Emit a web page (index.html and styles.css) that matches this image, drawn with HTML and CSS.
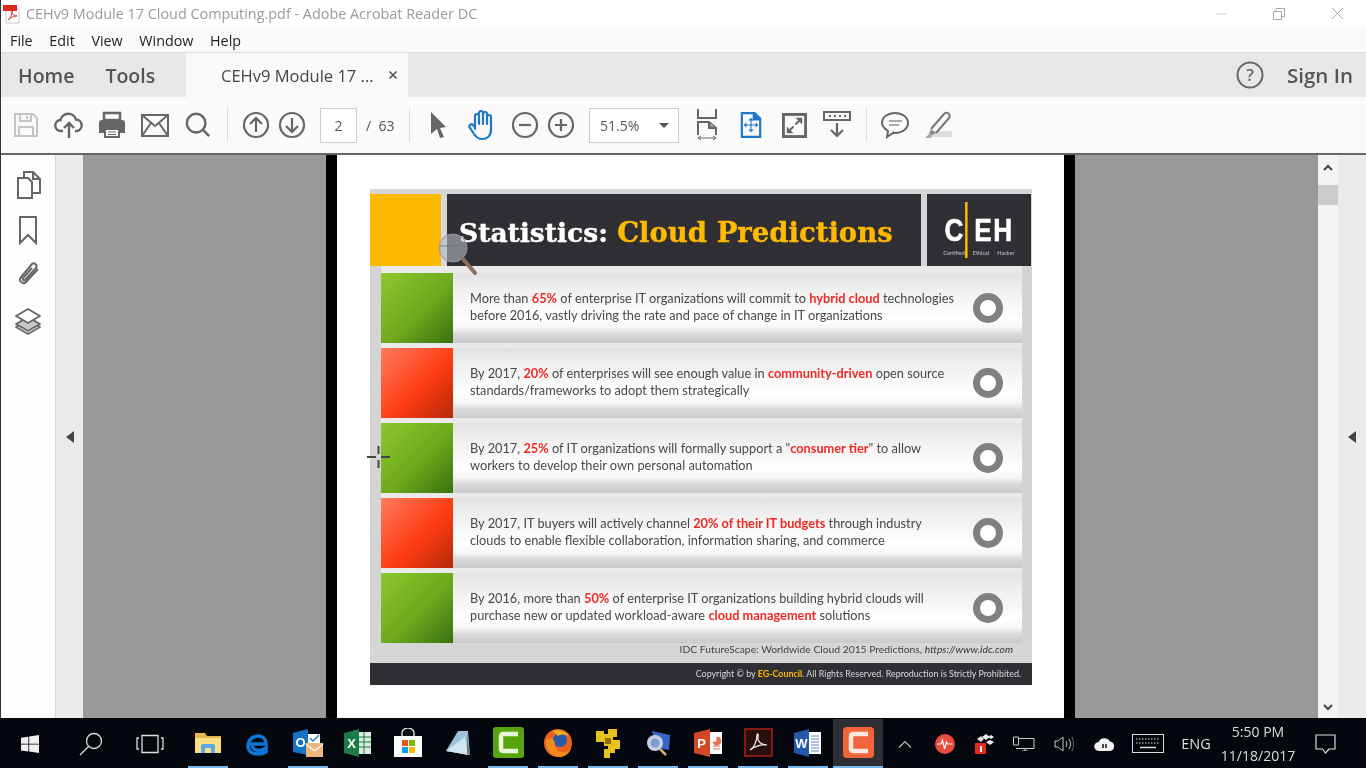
FILE: index.html
```html
<!DOCTYPE html>
<html lang="en">
<head>
    <meta charset="UTF-8" />
    <meta name="viewport" content="width=device-width, initial-scale=1.0" />
    <title>CEHv9 Module 17 Cloud Computing.pdf - Adobe Acrobat Reader DC</title>
    <link rel="stylesheet" href="styles.css">
</head>
<body>
<div class="window">
    <div class="titlebar">
        <svg class="pdf-icon" width="20" height="20" viewBox="0 0 20 20">
            <path d="M4 3h10l3 3v13H4z" fill="#fff" stroke="#c8c8c8"/>
            <path d="M6 16c3-2 4-6 4-9 0 3 2 5 5 5-3 0-6 1-9 4z" fill="none" stroke="#d8372c" stroke-width="1"/>
            <rect x="1" y="1" width="14" height="6" fill="#e0281e"/>
        </svg>
        <span class="title-text">CEHv9 Module 17 Cloud Computing.pdf - Adobe Acrobat Reader DC</span>
        <div class="win-controls">
            <span class="win-btn"><svg width="12" height="12" viewBox="0 0 12 12"><path d="M1 6h10" stroke="#d4d4d4"/></svg></span>
            <span class="win-btn"><svg width="12" height="12" viewBox="0 0 12 12"><path d="M.5 3.5h8v8h-8zM3 3V.5h8.5v8H9" fill="none" stroke="#a8a8a8"/></svg></span>
            <span class="win-btn"><svg width="13" height="13" viewBox="0 0 13 13"><path d="M1 1l11 11M12 1L1 12" stroke="#a8a8a8"/></svg></span>
        </div>
    </div>

    <div class="menubar">
        <span>File</span><span>Edit</span><span>View</span><span>Window</span><span>Help</span>
    </div>

    <div class="tabbar">
        <div class="nav-tabs">
            <span class="nav-tab">Home</span>
            <span class="nav-tab">Tools</span>
        </div>
        <div class="doc-tab">
            <span>CEHv9 Module 17 ...</span>
            <svg width="10" height="10" viewBox="0 0 10 10"><path d="M1.5 1.5l7 7M8.5 1.5l-7 7" stroke="#555" stroke-width="1.7"/></svg>
        </div>
        <div class="tab-right">
            <svg width="28" height="28" viewBox="0 0 28 28"><circle cx="14" cy="14" r="12.5" fill="none" stroke="#666" stroke-width="2"/><text x="14" y="20" text-anchor="middle" class="help-mark">?</text></svg>
            <span class="sign-in">Sign In</span>
        </div>
    </div>

    <div class="toolbar">
        <div class="tool-group">
            <span class="tool"><svg width="28" height="28" viewBox="0 0 28 28" fill="none" stroke="#c4c4c4" stroke-width="2"><path d="M3 3h18l4 4v18H3z"/><path d="M8 3v7h11V3M15 5v3M7 25v-9h14v9"/></svg></span>
            <span class="tool"><svg width="30" height="30" viewBox="0 0 30 30" fill="none" stroke="#666" stroke-width="2.4"><path d="M9 21H7a5.500 5.500 0 0 1-.5-11A8 8 0 0 1 22 9.500 5.800 5.800 0 0 1 23 21h-2"/><path d="M15 28V13M10 18l5-5 5 5"/></svg></span>
            <span class="tool"><svg width="30" height="30" viewBox="0 0 30 30"><path d="M7 3h16v7H7z" fill="none" stroke="#666" stroke-width="2.5"/><path d="M4 10h22a3 3 0 0 1 2 2v11h-5v-4H7v4H2V12a3 3 0 0 1 2-2z" fill="#666"/><path d="M8 19h14v8H8z" fill="#fff" stroke="#666" stroke-width="2"/><path d="M11 22h8M11 24.500h8" stroke="#666"/></svg></span>
            <span class="tool"><svg width="28" height="23" viewBox="0 0 28 23" fill="none" stroke="#666" stroke-width="2"><rect x="1" y="1" width="26" height="21"/><path d="M1 1l13 11L27 1M1 22l9-13M27 22l-9-13"/></svg></span>
            <span class="tool"><svg width="28" height="28" viewBox="0 0 30 30" fill="none" stroke="#666" stroke-width="2.6"><circle cx="13" cy="13" r="10"/><path d="M20 20l7 7"/></svg></span>
        </div>
        <span class="tool-sep sep-a"></span>
        <span class="tool ml-10"><svg width="28" height="28" viewBox="0 0 28 28" fill="none" stroke="#666" stroke-width="2.2"><circle cx="14" cy="14" r="12"/><path d="M14 21V7M8 13l6-6 6 6"/></svg></span>
        <span class="tool"><svg width="28" height="28" viewBox="0 0 28 28" fill="none" stroke="#666" stroke-width="2.2"><circle cx="14" cy="14" r="12"/><path d="M14 7v14M8 15l6 6 6-6"/></svg></span>
        <span class="page-box">2</span>
        <span class="page-total">/&nbsp;&nbsp;63</span>
        <span class="tool-sep sep-b"></span>
        <span class="tool ml-10"><svg width="20" height="28" viewBox="0 0 20 28"><path d="M3 1l15 15-6 1 4 9-4 1-3-9-6 5z" fill="#666"/></svg></span>
        <span class="tool ml-8"><svg width="30" height="32" viewBox="0 0 30 32" fill="none" stroke="#1f78c8" stroke-width="2.2" stroke-linecap="round"><path d="M8 20V7a2 2 0 0 1 4 0v8M12 15V4a2 2 0 0 1 4 0v11M16 15V5a2 2 0 0 1 4 0v10M20 15V8a2 2 0 0 1 4 0v13c0 6-4 9-9 9-4 0-6-2-8-5l-4-6a2 2 0 0 1 3-3l2 2"/></svg></span>
        <span class="tool ml-7"><svg width="28" height="28" viewBox="0 0 28 28" fill="none" stroke="#666" stroke-width="2.2"><circle cx="14" cy="14" r="12"/><path d="M8 14h12"/></svg></span>
        <span class="tool"><svg width="28" height="28" viewBox="0 0 28 28" fill="none" stroke="#666" stroke-width="2.2"><circle cx="14" cy="14" r="12"/><path d="M8 14h12M14 8v12"/></svg></span>
        <div class="zoom-box"><span>51.5%</span><i class="zoom-caret"></i></div>
        <span class="tool ml-10"><svg width="22" height="32" viewBox="0 0 22 32" fill="none" stroke="#666" stroke-width="2"><path d="M2 0v9h18V0"/><path d="M2 26V13h11l7 6v7"/><path d="M13 13v6h7" fill="#999"/><path d="M2 29h18M2 29l3-2M2 29l3 2M20 29l-3-2M20 29l-3 2" stroke-width="1"/></svg></span>
        <span class="tool ml-8"><svg width="22" height="28" viewBox="0 0 24 30" fill="none" stroke="#1f78c8" stroke-width="2.4"><path d="M2 2h14l6 6v20H2z"/><path d="M15 2v7h7" fill="#1f78c8"/><path d="M12 9v12M6 15h12" stroke-width="1.2"/><path d="M12 7l-3 3h6zM12 23l-3-3h6zM4 15l3-3v6zM20 15l-3-3v6z" fill="#1f78c8" stroke="none"/></svg></span>
        <span class="tool ml-7"><svg width="25" height="25" viewBox="0 0 26 26" fill="none" stroke="#666" stroke-width="3"><rect x="1.5" y="1.5" width="23" height="23"/><path d="M14 12l6-6M6 20l6-6" stroke-width="2"/><path d="M14 5h7v7zM5 14l7 7H5z" fill="#666" stroke="none"/></svg></span>
        <span class="tool ml-7"><svg width="28" height="28" viewBox="0 0 28 28" fill="none" stroke="#666"><rect x="1" y="1" width="26" height="8" stroke-width="2"/><path d="M6 5h2M11 5h2M16 5h2M21 5h2" stroke-width="2"/><path d="M14 12v13M8 19l6 6 6-6" stroke-width="2.2"/></svg></span>
        <span class="tool-sep sep-c"></span>
        <span class="tool ml-10"><svg width="28" height="28" viewBox="0 0 28 28" fill="none" stroke="#666" stroke-width="2"><path d="M14 2c7 0 13 4 13 10s-6 10-13 10c-1 0-2 0-2-.1L6 26l1-6c-3-2-6-4-6-8C1 6 7 2 14 2z"/><path d="M8 10h13M8 14h10" stroke="#aaa"/></svg></span>
        <span class="tool ml-7"><svg width="28" height="28" viewBox="0 0 28 28"><path d="M4 26h24v-6H10z" fill="#ddd"/><path d="M7 18L20 3a3 3 0 0 1 5 4L12 22" fill="none" stroke="#777" stroke-width="2"/><path d="M7 18l5 4-4 2-3-1z" fill="#888"/><path d="M1 27l4-4 3 1-1 3z" fill="#aaa"/></svg></span>
    </div>

    <div class="workspace">
        <aside class="sidebar">
            <svg width="28" height="30" viewBox="0 0 28 30" fill="none" stroke="#666" stroke-width="2"><path d="M10 7V2h9l7 7v14h-8"/><path d="M19 2v7h7"/><path d="M4 8h10l4 4v16H4z"/></svg>
            <svg width="20" height="30" viewBox="0 0 20 30" fill="none" stroke="#666" stroke-width="2"><path d="M2 2h16v26l-8-8-8 8z"/></svg>
            <svg width="26" height="28" viewBox="0 0 26 28" fill="none" stroke="#666" stroke-width="2"><path d="M23 9L11 22c-3 3-8-1-5-5L17 4c2-2 6 1 4 4L10 20c-1 1-3 0-2-2l9-10"/></svg>
            <svg class="layers" width="28" height="30" viewBox="0 0 28 30" stroke="#666" stroke-width="1.8" stroke-linejoin="round"><path d="M14 16l-12 7 12 7 12-7z" fill="none" transform="translate(0 -3)"/><path d="M14 10L2 17l12 7 12-7z" fill="#c8c8c8"/><path d="M14 2L2 9l12 7 12-7z" fill="#fdfdfd"/></svg>
        </aside>
        <div class="side-strip"><i class="arrow-left"></i></div>
        <main class="viewer">
            <div class="page-frame">
                <section class="slide">
                    <header class="slide-head">
                        <div class="head-square"></div>
                        <h1 class="slide-title">Statistics: <em>Cloud Predictions</em></h1>
                        <div class="ceh-logo">
                            <div class="ceh-mark"><span>C</span><i></i><span>EH</span></div>
                            <div class="ceh-sub"><span>Certified</span><span>Ethical</span><span>Hacker</span></div>
                        </div>
                    </header>
                    <div class="rows">
                        <div class="row">
                            <div class="tile green"></div>
                            <div class="row-body"><p>More than <b>65%</b> of enterprise IT organizations will commit to <b>hybrid cloud</b> technologies<br>before 2016, vastly driving the rate and pace of change in IT organizations</p><span class="ring"></span></div>
                        </div>
                        <div class="row">
                            <div class="tile red"></div>
                            <div class="row-body"><p>By 2017, <b>20%</b> of enterprises will see enough value in <b>community-driven</b> open source<br>standards/frameworks to adopt them strategically</p><span class="ring"></span></div>
                        </div>
                        <div class="row">
                            <div class="tile green"></div>
                            <div class="row-body"><p>By 2017, <b>25%</b> of IT organizations will formally support a "<b>consumer tier</b>" to allow<br>workers to develop their own personal automation</p><span class="ring"></span></div>
                        </div>
                        <div class="row">
                            <div class="tile red"></div>
                            <div class="row-body"><p>By 2017, IT buyers will actively channel <b>20% of their IT budgets</b> through industry<br>clouds to enable flexible collaboration, information sharing, and commerce</p><span class="ring"></span></div>
                        </div>
                        <div class="row">
                            <div class="tile green"></div>
                            <div class="row-body"><p>By 2016, more than <b>50%</b> of enterprise IT organizations building hybrid clouds will<br>purchase new or updated workload-aware <b>cloud management</b> solutions</p><span class="ring"></span></div>
                        </div>
                    </div>
                    <div class="source">IDC FutureScape: Worldwide Cloud 2015 Predictions, <i>https://www.idc.com</i></div>
                    <footer class="slide-foot">Copyright © by <b>EG-Council</b>. All Rights Reserved. Reproduction is Strictly Prohibited.</footer>

                    <svg class="magnifier" width="44" height="50" viewBox="0 0 44 50"><circle cx="15" cy="15" r="14" fill="#b4bac4" fill-opacity=".6" stroke="#999"/><path d="M25 26l12 14" stroke="#8a6f5e" stroke-width="4" stroke-linecap="round"/><path d="M2 13h26" stroke="#777" stroke-width="2" opacity=".5"/></svg>
                    <svg class="crosshair" width="24" height="24" viewBox="0 0 24 24"><path d="M0 12h9M14 12h9M11.5 1v8M11.5 15v8" stroke="#444" stroke-width="2"/></svg>
                </section>
            </div>
        </main>
        <div class="scrollbar">
            <svg width="10" height="7" viewBox="0 0 10 7"><path d="M1 6l4-4 4 4" fill="none" stroke="#444" stroke-width="2"/></svg>
            <div class="scroll-thumb"></div>
            <svg class="scroll-down" width="10" height="7" viewBox="0 0 10 7"><path d="M1 1l4 4 4-4" fill="none" stroke="#444" stroke-width="2"/></svg>
        </div>
        <div class="right-strip"><i class="arrow-left"></i></div>
    </div>
</div>

<div class="taskbar">
    <span class="sys-btn start"><svg width="18" height="18" viewBox="0 0 18 18" fill="#eee"><path d="M0 2.700l7.400-1v7H0zM8.200 1.600L18 0v8.700H8.200zM0 9.400h7.400v7l-7.400-1zM8.200 9.400H18V18l-9.800-1.500z"/></svg></span>
    <span class="sys-btn search"><svg width="24" height="24" viewBox="0 0 24 24" fill="none" stroke="#ddd" stroke-width="1.3"><circle cx="15" cy="9" r="7.5"/><path d="M9.500 14.500L1 23"/></svg></span>
    <span class="sys-btn taskview"><svg width="28" height="20" viewBox="0 0 28 20" fill="none" stroke="#ddd" stroke-width="1.3"><path d="M6 1.500h16v17H6z"/><path d="M3 4H1v11h2M25 4h2v11h-2"/></svg></span>

    <span class="app open"><svg width="28" height="24" viewBox="0 0 28 24"><path d="M1 2h10l2 3h14v17H1z" fill="#e6b84a"/><path d="M1 7h26v15H1z" fill="#fbdf83"/><path d="M7 22v-7a2 2 0 0 1 2-2h10a2 2 0 0 1 2 2v7h-4v-5h-6v5z" fill="#59a9e8"/></svg></span>
    <span class="app"><svg width="26" height="26" viewBox="0 0 26 26" fill="none"><path d="M5 14h16c0-5-3-8-8-8-6 0-10 5-10 10 0 6 5 8 10 8 3 0 6-1 8-2v-4c-3 2-6 3-9 2-3 0-5-3-5-6" stroke="#0a76d6" stroke-width="3.5"/></svg></span>
    <span class="app open"><svg width="32" height="30" viewBox="0 0 32 30"><path d="M1 5l15-4v26L1 24z" fill="#1473c4"/><text x="8.500" y="19" text-anchor="middle" class="app-letter">O</text><path d="M16 6h12v10H16z" fill="#fff"/><path d="M18 10l3 3 6-6" fill="none" stroke="#2a80c8" stroke-width="1.5"/><path d="M14 15h17v14H14z" fill="#ecb67c"/><path d="M14 16l8.500 7L31 16" fill="none" stroke="#fff" stroke-width="1.2"/></svg></span>
    <span class="app"><svg width="30" height="28" viewBox="0 0 30 28"><path d="M1 4l15-4v28L1 24z" fill="#1d7b46"/><text x="8.500" y="19" text-anchor="middle" class="app-letter">X</text><path d="M16 3h12v22H16z" fill="#dcebdd"/><path d="M16 8h12M16 13h12M16 18h12M21 3v22" stroke="#1d7b46"/></svg></span>
    <span class="app"><svg width="30" height="30" viewBox="0 0 30 30"><path d="M9 9V5a6 5 0 0 1 12 0v4" fill="none" stroke="#ddd" stroke-width="1.5"/><path d="M1 8h28v21H1z" fill="#fff"/><path d="M9 12h6v6H9z" fill="#f25022"/><path d="M16 12h6v6h-6z" fill="#7fba00"/><path d="M9 19h6v6H9z" fill="#00a4ef"/><path d="M16 19h6v6h-6z" fill="#ffb900"/></svg></span>
    <span class="app"><svg width="28" height="28" viewBox="0 0 28 28"><path d="M2 22L14 2h10l2 24z" fill="#9cc4dc"/><path d="M2 22l22 4-3-18z" fill="#cfe6f0"/><path d="M23 3l3 23-3-1z" fill="#777"/></svg></span>
    <span class="app open"><svg width="31" height="31" viewBox="0 0 31 31"><rect width="31" height="31" rx="3" fill="#57a50e"/><path d="M25 7H10a2 2 0 0 0-2 2v13a2 2 0 0 0 2 2h15" fill="none" stroke="#e8f5d8" stroke-width="4.5"/></svg></span>
    <span class="app open"><svg width="30" height="30" viewBox="0 0 30 30"><circle cx="15" cy="15" r="14" fill="#e8641e"/><circle cx="17" cy="12" r="7" fill="#2a5aa8"/><path d="M3 12C2 22 10 29 17 29c7 0 12-7 12-13 0 5-5 9-10 8-6-1-8-5-7-10L8 10z" fill="#f28a1c"/><path d="M10 3c6-2 12 0 16 5-4-2-8-2-11 0z" fill="#f5b02a"/></svg></span>
    <span class="app open"><svg width="26" height="30" viewBox="0 0 26 30" fill="#e9c21a"><path d="M1 3h8v3h4V1h9v8h-4v3h7v9h-5v4h-5v5H9v-9h4v-3H9v-4H1z"/><path d="M10 10h6v6h-6z" fill="#8c6f00"/></svg></span>
    <span class="app open"><svg width="26" height="30" viewBox="0 0 26 30"><path d="M7 3l18 4-1 15-12-2z" fill="#3666c8"/><circle cx="10" cy="15" r="8" fill="#c8d0de"/><circle cx="10" cy="15" r="4.5" fill="#7f9cd8"/><path d="M15 21l6 6" stroke="#c8b47a" stroke-width="2.5"/></svg></span>
    <span class="app open"><svg width="30" height="28" viewBox="0 0 30 28"><path d="M1 4l16-4v28L1 24z" fill="#d24726"/><text x="8.500" y="19" text-anchor="middle" class="app-letter">P</text><path d="M17 3h12v22H17z" fill="#fff"/><path d="M20 13a4 4 0 1 0 4-5v5zM20 17h7M20 20h7" fill="#e07050" stroke="#e07050"/></svg></span>
    <span class="app open"><svg width="29" height="29" viewBox="0 0 29 29"><rect x="1" y="1" width="27" height="27" fill="#2a0e0c" stroke="#a81f14" stroke-width="1.5"/><path d="M6 22c4-2 7-9 7-15 0-2 2-1 1 2-1 4 3 8 9 8-4-1-12 1-17 5z" fill="none" stroke="#eee" stroke-width="1.2"/></svg></span>
    <span class="app open"><svg width="30" height="28" viewBox="0 0 30 28"><path d="M1 4l15-4v28L1 24z" fill="#2458a8"/><text x="8.500" y="19" text-anchor="middle" class="app-letter">W</text><path d="M16 3h12v22H16z" fill="#fff"/><path d="M18 7h8M18 10h8M18 13h8M18 16h8M18 19h8M18 22h8" stroke="#5a80c0"/></svg></span>
    <span class="app open active"><svg width="31" height="31" viewBox="0 0 31 31"><rect width="31" height="31" rx="4" fill="#f4643c"/><path d="M25 7H10a2 2 0 0 0-2 2v13a2 2 0 0 0 2 2h15" fill="none" stroke="#fde8e0" stroke-width="4.5"/></svg></span>

    <div class="tray">
        <span class="tray-item w-40"><svg width="14" height="8" viewBox="0 0 14 8" fill="none" stroke="#bbb" stroke-width="1.2"><path d="M1 7.500L7 1.500l6 6"/></svg></span>
        <span class="tray-item w-39"><svg width="20" height="20" viewBox="0 0 20 20"><circle cx="10" cy="10" r="10" fill="#e84a3c"/><path d="M2 10h4l1.500-4 2 9 2-7 1 2h5" fill="none" stroke="#fff" stroke-width="1.2"/></svg></span>
        <span class="tray-item w-40"><svg width="20" height="20" viewBox="0 0 20 20"><path d="M1 9h11v11H1z" fill="#e82820"/><path d="M6 12h2v6H6z" fill="#fff"/><path d="M8 3l4-3 4 3-4 3zM14 3l3-2 3 2-3 2zM12 8l4-2 4 2-4 3z" fill="#eee"/><path d="M3 5l4-3 3 3-3 3z" fill="#ddd"/></svg></span>
        <span class="tray-item w-40"><svg width="22" height="15" viewBox="0 0 22 15" fill="none" stroke="#ccc"><path d="M5 2.500h16v10H3"/><path d="M.5 1h5v8h-5zM9 15h6M12 13v2"/></svg></span>
        <span class="tray-item w-40"><svg width="20" height="16" viewBox="0 0 20 16" fill="none" stroke="#ccc"><path d="M1 5h3l5-4v14l-5-4H1z"/><path d="M12 5c1 2 1 4 0 6M15 3c2 3 2 7 0 10"/><path d="M18 1c2 4 2 10 0 14" stroke="#666"/></svg></span>
        <span class="tray-item w-40"><svg width="21" height="14" viewBox="0 0 21 14"><path d="M5 14a4.500 4.500 0 0 1-.5-9A6.500 6.500 0 0 1 16 4.500 4.800 4.800 0 0 1 16 14z" fill="#f2f2f2"/><path d="M9 7v4M12 7v4" stroke="#111" stroke-width="1.5"/></svg></span>
        <span class="tray-item w-48"><svg width="32" height="19" viewBox="0 0 32 19" fill="none" stroke="#ddd"><rect x=".5" y=".5" width="31" height="18"/><path d="M4 5h24M4 9h24" stroke-dasharray="1.500 1.500"/><path d="M8 13.500h16" stroke-width="1.5"/></svg></span>
        <span class="tray-item w-48 lang">ENG</span>
        <div class="clock"><span>5:50 PM</span><span>11/18/2017</span></div>
        <span class="tray-item notif"><svg width="21" height="20" viewBox="0 0 21 20" fill="none" stroke="#ddd" stroke-width="1.2"><path d="M1 1h19v14h-6l-3.500 4L7.500 15H1z"/></svg></span>
    </div>
</div>
</body>
</html>
```

FILE: styles.css
```css
* {
    box-sizing: border-box;
}
html, body {
    margin: 0;
    height: 100%;
    overflow: hidden;
}
body {
    width: 1366px;
    height: 768px;
    font-family: "Open Sans", sans-serif;
    background: #fff;
    display: flex;
    flex-direction: column;
}
.window {
    height: 718px;
    display: flex;
    flex-direction: column;
    border-left: 1px solid #333;
    filter: blur(.35px);
}

/* title + menu */
.titlebar {
    height: 27px;
    display: flex;
    align-items: center;
    background: #fff;
    padding-left: 1px;
}
.pdf-icon {
    margin-right: 4px;
}
.title-text {
    font-size: 14.4px;
    color: #9a9a9a;
}
.win-controls {
    margin-left: auto;
    display: flex;
}
.win-btn {
    width: 58px;
    height: 27px;
    display: flex;
    align-items: center;
    justify-content: center;
}
.menubar {
    height: 26px;
    background: #f9f9f9;
    border-bottom: 1px solid #ddd;
    display: flex;
    align-items: center;
    padding: 1px 0 0 9px;
    gap: 16.7px;
    font-size: 14.3px;
    color: #222;
}

/* tabs */
.tabbar {
    height: 44px;
    background: #e8e8e8;
    display: flex;
    align-items: center;
}
.nav-tabs {
    width: 185px;
    flex: none;
    display: flex;
    gap: 31px;
    padding-left: 17px;
}
.nav-tab {
    font-size: 19.5px;
    font-weight: 600;
    color: #555;
}
.doc-tab {
    width: 222px;
    height: 44px;
    background: #f9f9f9;
    display: flex;
    align-items: center;
    padding-left: 35px;
    font-size: 16.5px;
    color: #444;
}
.doc-tab svg {
    margin-left: auto;
    margin-right: 10px;
}
.tab-right {
    margin-left: auto;
    display: flex;
    align-items: center;
    padding-right: 13px;
}
.help-mark {
    font-size: 17px;
    font-weight: 600;
    fill: #666;
}
.sign-in {
    font-size: 20.5px;
    font-weight: 600;
    color: #555;
    margin-left: 23px;
}

/* toolbar */
.toolbar {
    height: 58px;
    background: #fafafa;
    border-bottom: 2px solid #666;
    display: flex;
    align-items: center;
    padding-left: 7px;
}
.tool-group {
    display: flex;
    gap: 7px;
}
.tool {
    width: 36px;
    height: 36px;
    flex: none;
    display: flex;
    align-items: center;
    justify-content: center;
}
.ml-7 { margin-left: 7px; }
.ml-8 { margin-left: 8px; }
.ml-10 { margin-left: 10px; }
.tool-sep {
    width: 1px;
    height: 34px;
    background: #ddd;
    flex: none;
}
.sep-a { margin-left: 11px; }
.sep-b { margin-left: 14px; }
.sep-c { margin-left: 11px; }
.page-box {
    margin-left: 10px;
    width: 37px;
    height: 35px;
    background: #fff;
    border: 1px solid #ccc;
    display: flex;
    align-items: center;
    justify-content: center;
    font-size: 14px;
    color: #555;
}
.page-total {
    margin-left: 9px;
    width: 29px;
    font-size: 14px;
    color: #555;
    white-space: nowrap;
}
.zoom-box {
    margin-left: 10px;
    width: 90px;
    height: 35px;
    background: #fff;
    border: 1px solid #ccc;
    display: flex;
    align-items: center;
    padding: 0 9px 0 10px;
    font-size: 14px;
    color: #555;
}
.zoom-caret {
    margin-left: auto;
    border-left: 5px solid transparent;
    border-right: 5px solid transparent;
    border-top: 5px solid #555;
}

/* document area */
.workspace {
    flex: 1;
    display: flex;
    min-height: 0;
}
.sidebar {
    width: 55px;
    background: #fdfdfd;
    border-right: 1px solid #d8d8d8;
    display: flex;
    flex-direction: column;
    align-items: center;
    gap: 15px;
    padding-top: 15px;
}
.layers {
    margin-top: 4px;
}
.side-strip {
    width: 27px;
    background: #ebebeb;
    display: flex;
    align-items: center;
    justify-content: center;
}
.right-strip {
    width: 28px;
    background: #ebebeb;
    display: flex;
    align-items: center;
    justify-content: center;
}
.arrow-left {
    border-top: 6px solid transparent;
    border-bottom: 6px solid transparent;
    border-right: 8px solid #444;
}
.viewer {
    flex: 1;
    background: #999;
    display: flex;
    justify-content: center;
    min-height: 0;
    overflow: hidden;
}
.page-frame {
    width: 749px;
    background: #fff;
    border-left: 11px solid #000;
    border-right: 11px solid #000;
    padding: 34px 0 0 33px;
}
.scrollbar {
    width: 20px;
    background: #f4f4f4;
    display: flex;
    flex-direction: column;
    align-items: center;
    padding-top: 9px;
}
.scroll-thumb {
    width: 20px;
    height: 20px;
    margin-top: 14px;
    background: #ccc;
}
.scroll-down {
    margin-top: auto;
    margin-bottom: 7px;
}

/* the slide */
.slide {
    position: relative;
    width: 662px;
    height: 496px;
    background: #d6d6d6;
    padding-top: 5px;
    font-family: Lato, "Open Sans", sans-serif;
}
.slide-head {
    height: 72px;
    display: flex;
    gap: 6px;
}
.head-square {
    width: 71px;
    background: #ffb900;
}
.slide-title {
    flex: 1;
    margin: 0;
    background: #302f33;
    color: #fff;
    font-family: "DejaVu Serif", serif;
    font-size: 26.5px;
    font-weight: 700;
    line-height: 76px;
    padding-left: 12px;
    white-space: nowrap;
    -webkit-text-stroke: .4px;
}
.slide-title em {
    font-style: normal;
    font-size: 27.5px;
    color: #ffb900;
}
.ceh-logo {
    width: 104px;
    background: #302f33;
    margin-right: 1px;
    display: flex;
    flex-direction: column;
    align-items: center;
    padding-top: 8px;
}
.ceh-mark {
    height: 56px;
    flex: none;
    display: flex;
    align-items: center;
    gap: 3px;
    color: #fff;
    font-family: "Liberation Sans", sans-serif;
    font-weight: 700;
    font-size: 32px;
    letter-spacing: 2px;
    transform: scaleX(.82);
    -webkit-text-stroke: .6px;
}
.ceh-mark i {
    width: 3px;
    height: 56px;
    background: #ffb900;
    margin: 0 5px 0 -3px;
}
.ceh-sub {
    display: flex;
    gap: 8px;
    margin-top: -8px;
    font-size: 5.5px;
    font-weight: 700;
    color: #aaa;
}
.rows {
    padding: 7px 10px 0 11px;
    background: linear-gradient(90deg, #d4d4d4 11px, #eaeaea 11px, #eaeaea 652px, #d4d4d4 652px);
}
.row {
    height: 70px;
    display: flex;
    margin-bottom: 5px;
}
.row:last-child {
    margin-bottom: 0;
}
.tile {
    width: 72px;
    flex: none;
}
.green {
    background: linear-gradient(135deg, #8bc92e, #6ea81c 55%, #3a7010);
}
.red {
    background: linear-gradient(135deg, #ff7a60, #ff3d12 55%, #b4280c);
}
.row-body {
    flex: 1;
    display: flex;
    align-items: center;
    padding: 0 19px 0 17px;
    background: linear-gradient(180deg, #e2e2e2, #ececec 16%, #fff 66%, #f6f6f6 78%, #d8d8d8 88%, #cacaca);
}
.row-body p {
    margin: 0 0 3px;
    font-size: 12.77px;
    line-height: 16.7px;
    color: #484848;
    white-space: nowrap;
}
.row-body b {
    color: #ee2a24;
    font-weight: 700;
}
.ring {
    margin-left: auto;
    width: 30px;
    height: 30px;
    border-radius: 50%;
    border: 7px solid #808080;
    background: #fff;
    flex: none;
}
.source {
    height: 20px;
    padding-right: 19px;
    text-align: right;
    font-size: 10.3px;
    line-height: 13px;
    color: #444;
}
.source i {
    color: #333;
}
.slide-foot {
    height: 22px;
    background: #302f33;
    color: #d8d8d8;
    font-size: 8.92px;
    line-height: 22px;
    text-align: right;
    padding-right: 11px;
    white-space: nowrap;
}
.slide-foot b {
    color: #ffb900;
}
.magnifier {
    position: absolute;
    left: 68px;
    top: 44px;
}
.crosshair {
    position: absolute;
    left: -3px;
    top: 256px;
}

/* taskbar */
.taskbar {
    height: 50px;
    background: #05070e;
    display: flex;
    align-items: stretch;
    padding-top: 1px;
    flex: none;
    filter: blur(.35px);
}
.sys-btn {
    display: flex;
    align-items: center;
    justify-content: center;
}
.start { width: 60px; }
.search { width: 62px; }
.taskview {
    width: 56px;
    margin-right: 5px;
}
.app {
    width: 50px;
    position: relative;
    display: flex;
    align-items: center;
    justify-content: center;
    padding-bottom: 2px;
}
.app.open::after {
    content: "";
    position: absolute;
    left: 5px;
    right: 5px;
    bottom: 0;
    height: 2px;
    background: #76b9ed;
}
.app.active {
    background: #2e3035;
}
.app.active::after {
    left: 0;
    right: 0;
}
.app-letter {
    font-family: "Liberation Sans", sans-serif;
    font-size: 13px;
    font-weight: 700;
    fill: #fff;
}
.tray {
    display: flex;
    align-items: stretch;
    margin-left: 2px;
    color: #ddd;
}
.tray-item {
    display: flex;
    align-items: center;
    justify-content: center;
}
.w-39 { width: 39px; }
.w-40 { width: 40px; }
.w-48 { width: 48px; }
.lang {
    font-size: 14.5px;
}
.clock {
    width: 76px;
    display: flex;
    flex-direction: column;
    justify-content: center;
    align-items: center;
    font-size: 14px;
    line-height: 24px;
    white-space: nowrap;
}
.notif {
    width: 58px;
}
```
